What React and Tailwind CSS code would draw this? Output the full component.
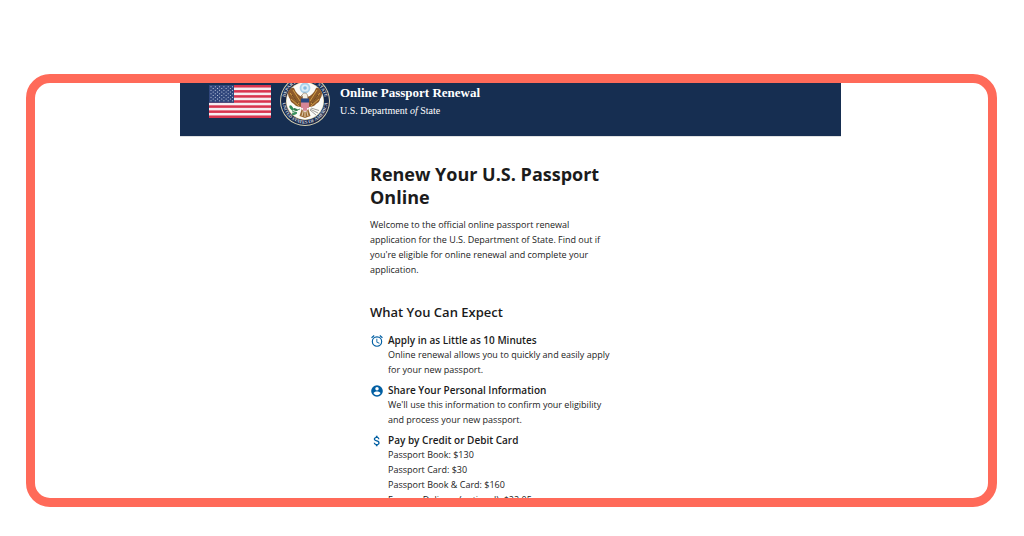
const stars = Array.from({ length: 9 }, (_, row) =>
  Array.from({ length: row % 2 ? 5 : 6 }, (_, col) => ({
    x: (row % 2 ? 4.2 : 2) + col * 4.3,
    y: 1.8 + row * 1.75,
  }))
).flat();

const Flag = () => (
  <svg viewBox="0 0 62 33" className="h-[33px] w-[62px] shrink-0" role="img" aria-label="U.S. flag">
    <rect width="62" height="33" fill="#f6eef2" />
    {[0, 2, 4, 6, 8, 10, 12].map((i) => (
      <rect key={i} y={(i * 33) / 13} width="62" height={33 / 13} fill="#d8344f" />
    ))}
    <rect width="25" height="17.8" fill="#30467c" />
    {stars.map((s, i) => (
      <circle key={i} cx={s.x} cy={s.y} r="0.55" fill="#d5ddec" />
    ))}
  </svg>
);

const Seal = () => (
  <svg viewBox="0 0 50 50" className="size-[50px] shrink-0" role="img" aria-label="Department of State seal">
    <defs>
      <path id="seal-top" d="M5.8 30 A19.9 19.9 0 1 1 44.2 30" />
      <path id="seal-bottom" d="M2.4 25 A22.6 22.6 0 0 0 47.6 25" />
    </defs>
    <circle cx="25" cy="25" r="25" fill="#d9d3b4" />
    <circle cx="25" cy="25" r="24" fill="#17294b" />
    <circle cx="25" cy="25" r="19" fill="#d6c99a" />
    <circle cx="25" cy="25" r="18.5" fill="#fbfbf8" />
    <g fill="#d9dce0" fontFamily="Liberation Serif, serif" fontSize="4.6" fontWeight="700">
      <text>
        <textPath href="#seal-top" startOffset="50%" textAnchor="middle">DEPARTMENT OF STATE</textPath>
      </text>
      <text>
        <textPath href="#seal-bottom" startOffset="50%" textAnchor="middle">UNITED STATES OF AMERICA</textPath>
      </text>
    </g>
    {/* glory */}
    <circle cx="25" cy="12" r="5.4" fill="#a9d0ea" />
    <circle cx="25" cy="12" r="3.6" fill="#dcecf6" />
    <circle cx="25" cy="12" r="1.8" fill="#86b9df" />
    {/* wings */}
    <path d="M23 21 C19 20 16 17 14 12 C12 11 9 13 8 17 C8 20 9 22 10 23 C10 25 12 27 14 28 C15 30 18 31 22 31Z" fill="#8c5a2b" />
    <path d="M27 21 C31 20 34 17 36 12 C38 11 41 13 42 17 C42 20 41 22 40 23 C40 25 38 27 36 28 C35 30 32 31 28 31Z" fill="#8c5a2b" />
    <path d="M13 14 L20 25 M10 17 L19 28 M11 23 L19 30 M37 14 L30 25 M40 17 L31 28 M39 23 L31 30" stroke="#d7a64a" strokeWidth="0.9" fill="none" />
    <path d="M12 19 L18 27 M38 19 L32 27" stroke="#4f3218" strokeWidth="0.8" fill="none" />
    {/* head and tail */}
    <path d="M22.5 18.5 C23 16.5 26.5 16.5 27.5 19 L28 23 H22.5 V20 L21 20Z" fill="#f3efe4" stroke="#6b4a2a" strokeWidth="0.5" />
    <path d="M22 32 H28 L30.5 40 L25 42 L19.5 40Z" fill="#9b6b35" />
    <path d="M23.5 34 L22 40 M25 34 V41 M26.5 34 L28 40" stroke="#f3ead3" strokeWidth="0.8" />
    {/* shield */}
    <path d="M21 23 H29 V30 C29 33 27 35 25 36 C23 35 21 33 21 30Z" fill="#f4eef0" />
    <path d="M22 26 V32 M24 26 V34.8 M26 26 V34.8 M28 26 V32" stroke="#bd304d" strokeWidth="1.1" />
    <path d="M21 22.5 H29 V26.5 H21Z" fill="#294781" />
    {/* olive branch and arrows */}
    <path d="M20 33 L12 36" stroke="#2f7a4b" strokeWidth="0.8" />
    <ellipse cx="11.5" cy="32" rx="3" ry="1.5" transform="rotate(55 11.5 32)" fill="#2f8a55" />
    <ellipse cx="14.5" cy="37.5" rx="2.8" ry="1.4" transform="rotate(-20 14.5 37.5)" fill="#3b9160" />
    <ellipse cx="15.5" cy="33.5" rx="2.4" ry="1.1" transform="rotate(20 15.5 33.5)" fill="#2f7a4b" />
    <path d="M30 33 L38 37 M30 34 L36 39 M31 32 L39 34.5" stroke="#77746e" strokeWidth="0.7" />
  </svg>
);

const iconClass = 'mt-px size-[14px] shrink-0 text-[#005ea2]';

const AlarmIcon = () => (
  <svg viewBox="0 0 24 24" className={iconClass} fill="currentColor" aria-hidden="true">
    <path d="M22 5.72l-4.6-3.86-1.29 1.53 4.6 3.86L22 5.72zM7.88 3.39L6.6 1.86 2 5.71l1.29 1.53 4.59-3.85zM12.5 8H11v6l4.75 2.85.75-1.23-4-2.37V8zM12 4a9 9 0 1 0 0 18 9 9 0 0 0 0-18zm0 16a7 7 0 1 1 0-14 7 7 0 0 1 0 14z" />
  </svg>
);

const PersonIcon = () => (
  <svg viewBox="0 0 24 24" className={iconClass} fill="currentColor" aria-hidden="true">
    <path d="M12 2a10 10 0 1 0 0 20 10 10 0 0 0 0-20zm0 3a3 3 0 1 1 0 6 3 3 0 0 1 0-6zm0 14.2a7.2 7.2 0 0 1-6-3.22c.03-1.99 4-3.08 6-3.08s5.97 1.09 6 3.08a7.2 7.2 0 0 1-6 3.22z" />
  </svg>
);

const DollarIcon = () => (
  <svg viewBox="0 0 24 24" className={iconClass} fill="currentColor" aria-hidden="true">
    <path d="M11.8 10.9c-2.27-.59-3-1.2-3-2.15 0-1.09 1.01-1.85 2.7-1.85 1.78 0 2.44.85 2.5 2.1h2.21c-.07-1.72-1.12-3.3-3.21-3.81V3h-3v2.16c-1.94.42-3.5 1.68-3.5 3.61 0 2.31 1.91 3.46 4.7 4.13 2.5.6 3 1.48 3 2.41 0 .69-.49 1.79-2.7 1.79-2.06 0-2.87-.92-2.98-2.1h-2.2c.12 2.19 1.76 3.42 3.68 3.83V21h3v-2.15c1.95-.37 3.5-1.5 3.5-3.55 0-2.84-2.43-3.81-4.7-4.4z" />
  </svg>
);

const expectations = [
  {
    icon: AlarmIcon,
    title: 'Apply in as Little as 10 Minutes',
    lines: ['Online renewal allows you to quickly and easily apply', 'for your new passport.'],
  },
  {
    icon: PersonIcon,
    title: 'Share Your Personal Information',
    lines: ["We'll use this information to confirm your eligibility", 'and process your new passport.'],
  },
  {
    icon: DollarIcon,
    title: 'Pay by Credit or Debit Card',
    lines: [
      'Passport Book: $130',
      'Passport Card: $30',
      'Passport Book & Card: $160',
      'Express Delivery (optional): $22.05',
    ],
  },
];

export default function App() {
  return (
    <div className="h-screen bg-white pt-[74px] pr-[27px] pb-[29px] pl-[26px] font-['Open_Sans','Noto_Sans',sans-serif] text-[#1b1b1b]">
      <div className="h-full overflow-hidden rounded-[24px] border-[9px] border-[#ff6a59] pr-[147px] pl-[145px]">
        {/* ── Site header ── */}
        <header className="-mt-[17px] flex items-center gap-[9px] border-b border-[#dfe1e2] bg-[#162e51] py-[10px] pl-[29px] font-['Liberation_Serif',serif] text-white">
          <Flag />
          <Seal />
          <div className="pt-0.5 pl-px">
            <p className="text-[13px] leading-[18px] font-bold">Online Passport Renewal</p>
            <p className="text-[10px] leading-[18px]">
              U.S. Department <i>of</i> State
            </p>
          </div>
        </header>

        {/* ── Content ── */}
        <main className="pt-[26px] pl-[190px] whitespace-nowrap">
          <h1 className="text-[18px] leading-[23px] font-bold">
            Renew Your U.S. Passport
            <br />
            Online
          </h1>
          <p className="mt-2 text-[9px] leading-[15px]">
            Welcome to the official online passport renewal
            <br />
            application for the U.S. Department of State. Find out if
            <br />
            you're eligible for online renewal and complete your
            <br />
            application.
          </p>

          <h2 className="mt-[22px] text-[13px] leading-[26px] font-semibold">What You Can Expect</h2>
          <ul className="mt-2 space-y-[6px]">
            {expectations.map(({ icon: Icon, title, lines }) => (
              <li key={title} className="flex gap-1">
                <Icon />
                <div>
                  <h3 className="text-[10px] leading-[14px] font-semibold">{title}</h3>
                  {lines.map((line) => (
                    <p key={line} className="text-[9px] leading-[15px]">
                      {line}
                    </p>
                  ))}
                </div>
              </li>
            ))}
          </ul>
        </main>
      </div>
    </div>
  );
}
